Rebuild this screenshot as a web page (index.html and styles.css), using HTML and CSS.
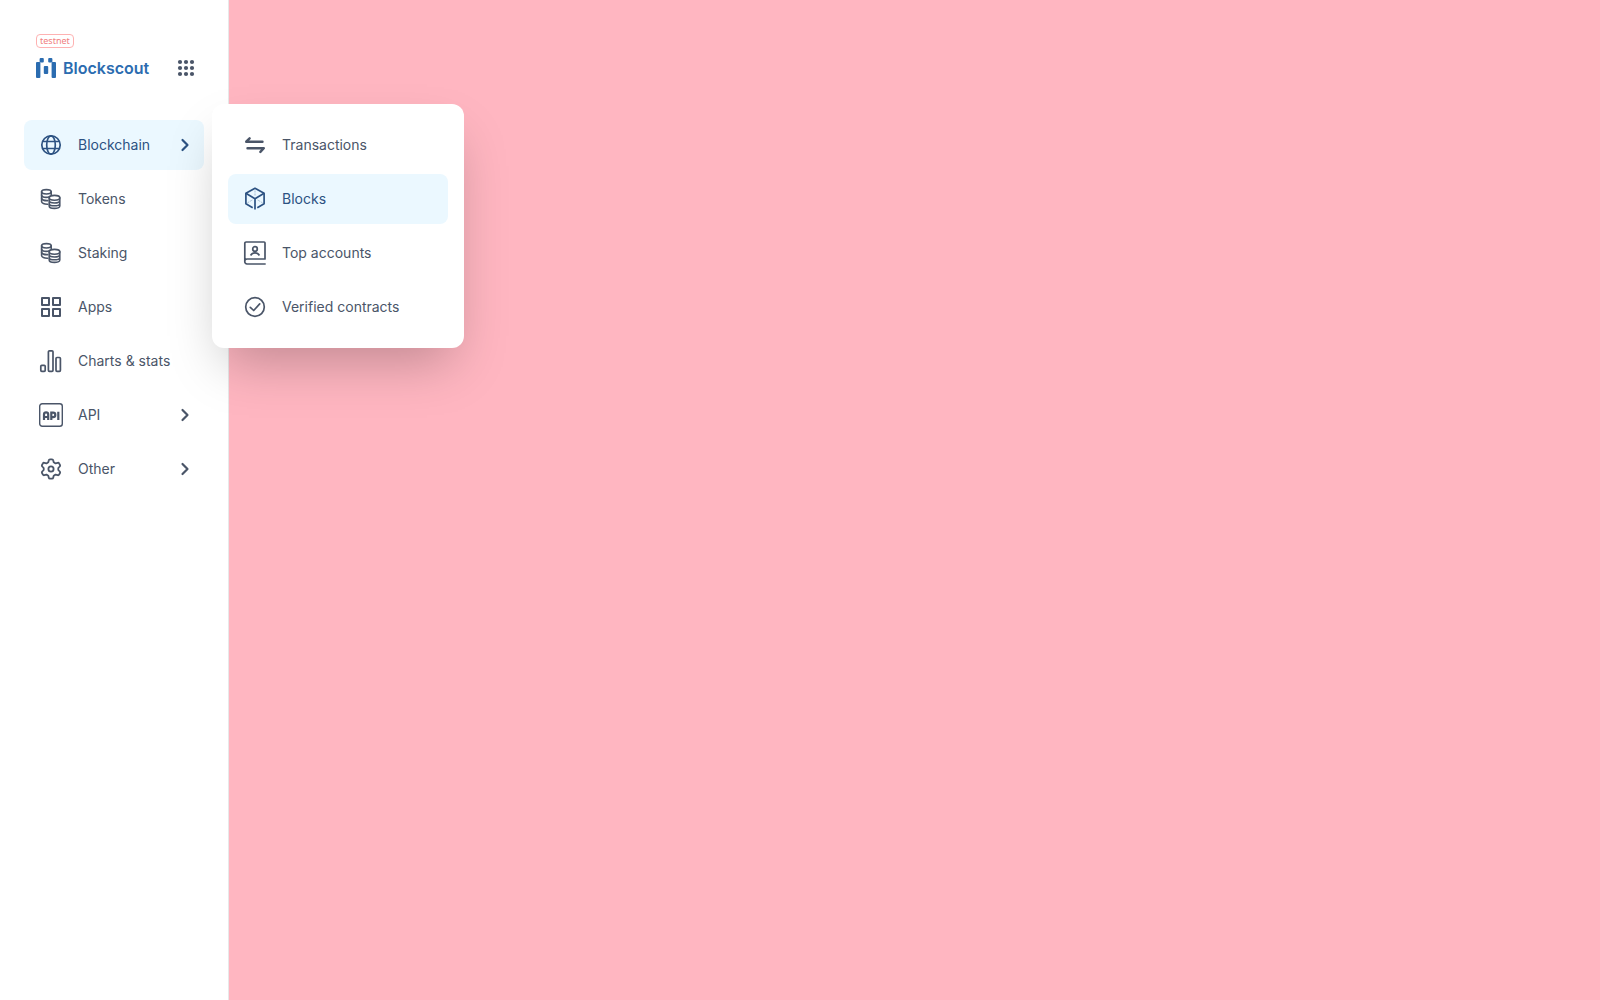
FILE: index.html
```html
<!DOCTYPE html>
<html lang="en">
<head>
<meta charset="utf-8">
<title>Blockscout</title>
<link rel="stylesheet" href="styles.css">
</head>
<body>
<svg class="sprite" aria-hidden="true">
  <symbol id="chevron" viewBox="0 0 20 20">
    <path d="M6.500 5l5 5-5 5" fill="none" stroke="currentColor" stroke-width="2.200" stroke-linecap="round" stroke-linejoin="round"/>
  </symbol>
  <symbol id="coins" viewBox="0 0 30 30">
    <g fill="none" stroke="currentColor" stroke-width="1.600" stroke-linecap="round">
      <ellipse cx="10.400" cy="7.800" rx="4.800" ry="2.200"/>
      <path d="M5.600 7.800v9.800c0 1.800 2.600 2.700 6.200 2.600M15.200 7.800v3"/>
      <path d="M5.600 11c0 2.500 5 3 8 1.600M5.600 14.300c0 1.600 2.600 2.500 6.200 2.300"/>
      <ellipse cx="18.500" cy="13.800" rx="5.300" ry="2.400"/>
      <path d="M13.200 13.800v8.200c0 3.200 10.600 3.200 10.600 0v-8.200M13.200 16.600c0 3.200 10.600 3.200 10.600 0M13.200 19.400c0 3.200 10.600 3.200 10.600 0"/>
    </g>
  </symbol>
</svg>
<div class="page">
  <aside class="sidebar">
    <header class="brand">
      <a class="logo" href="#">
        <span class="badge">testnet</span>
        <span class="logo-row">
          <svg class="logo-mark" viewBox="0 0 20 20" fill="currentColor" aria-hidden="true">
            <rect x="0" y="4" width="4.400" height="16" rx="1"/>
            <rect x="3.600" y="0" width="4.200" height="4.500" rx="1"/>
            <rect x="12.200" y="0" width="4.200" height="4.500" rx="1"/>
            <rect x="15.600" y="4" width="4.400" height="16" rx="1"/>
            <rect x="7.800" y="8" width="4.400" height="8" rx="1"/>
          </svg>
          <span class="logo-name">Blockscout</span>
        </span>
      </a>
      <button class="apps-button" type="button" aria-label="Networks">
        <svg class="icon-small" viewBox="0 0 20 20" fill="currentColor" aria-hidden="true">
          <circle cx="4" cy="4" r="2.100"/><circle cx="10" cy="4" r="2.100"/><circle cx="16" cy="4" r="2.100"/>
          <circle cx="4" cy="10" r="2.100"/><circle cx="10" cy="10" r="2.100"/><circle cx="16" cy="10" r="2.100"/>
          <circle cx="4" cy="16" r="2.100"/><circle cx="10" cy="16" r="2.100"/><circle cx="16" cy="16" r="2.100"/>
        </svg>
      </button>
    </header>
    <nav>
      <ul class="menu">
        <li class="menu-entry">
          <button class="item active" type="button" aria-expanded="true">
            <svg class="icon" viewBox="0 0 30 30" fill="none" stroke="currentColor" stroke-width="1.700" aria-hidden="true">
              <circle cx="15" cy="15" r="9.200"/>
              <ellipse cx="15" cy="15" rx="4.300" ry="9.200"/>
              <path d="M6.800 11.500h16.400M6.800 18.500h16.400"/>
            </svg>
            <span class="label">Blockchain</span>
            <svg class="icon-small" aria-hidden="true"><use href="#chevron"/></svg>
          </button>
          <ul class="menu submenu">
            <li><a class="item" href="#">
              <svg class="icon" viewBox="0 0 30 30" fill="none" stroke="currentColor" stroke-width="2.400" stroke-linecap="round" stroke-linejoin="round" aria-hidden="true">
                <path d="M22.500 11.700H6.200l3.400-3.400M7.500 18.300h16.300l-3.400 3.600"/>
              </svg>
              <span class="label">Transactions</span></a></li>
            <li><a class="item active" href="#">
              <svg class="icon" viewBox="0 0 30 30" fill="none" stroke="currentColor" stroke-width="1.700" stroke-linejoin="round" aria-hidden="true">
                <path d="M12.700 23.700L5.900 19.800V9.300L15 4.300l9.100 5v10.500l-6.800 3.900"/>
                <path d="M5.900 9.300l9.100 5.400 9.100-5.400M15 14.700v10.800"/>
                <path d="M15 6.500v6M7.500 18.800l5.500-3.200M22.500 18.800L17 15.600" stroke-width="1" stroke-dasharray="2 1" opacity=".35"/>
              </svg>
              <span class="label">Blocks</span></a></li>
            <li><a class="item" href="#">
              <svg class="icon" viewBox="0 0 30 30" fill="none" stroke="currentColor" stroke-width="1.700" stroke-linejoin="round" aria-hidden="true">
                <path d="M25.700 26H7a2.300 2.300 0 0 1-2.200-2.500V5.300A1.300 1.300 0 0 1 6.100 4h18a.9.900 0 0 1 .9.800v16.200H7a2.200 2.200 0 0 0-2.200 2.500"/>
                <circle cx="15" cy="11" r="2.300"/>
                <path d="M10.600 17.500c1-1.900 2.600-2.700 4.400-2.700s3.400.8 4.400 2.700"/>
              </svg>
              <span class="label">Top accounts</span></a></li>
            <li><a class="item" href="#">
              <svg class="icon" viewBox="0 0 30 30" fill="none" stroke="currentColor" stroke-width="1.700" stroke-linecap="round" stroke-linejoin="round" aria-hidden="true">
                <circle cx="15" cy="15" r="9.300"/>
                <path d="M10.300 15.300l3.400 3.200 6-6.600"/>
              </svg>
              <span class="label">Verified contracts</span></a></li>
          </ul>
        </li>
        <li><a class="item" href="#">
          <svg class="icon" aria-hidden="true"><use href="#coins"/></svg>
          <span class="label">Tokens</span></a></li>
        <li><a class="item" href="#">
          <svg class="icon" aria-hidden="true"><use href="#coins"/></svg>
          <span class="label">Staking</span></a></li>
        <li><a class="item" href="#">
          <svg class="icon" viewBox="0 0 30 30" fill="none" stroke="currentColor" stroke-width="2" stroke-linejoin="round" aria-hidden="true">
            <path d="M6 6h7v7H6zM17 6h7v7h-7zM6 17h7v7H6zM17 17h7v7h-7z"/>
          </svg>
          <span class="label">Apps</span></a></li>
        <li><a class="item" href="#">
          <svg class="icon" viewBox="0 0 30 30" fill="none" stroke="currentColor" stroke-width="1.700" aria-hidden="true">
            <rect x="4.800" y="19.300" width="4.400" height="6" rx="1"/>
            <rect x="12.400" y="4.800" width="4.600" height="20.500" rx="1"/>
            <rect x="20" y="11.500" width="4.400" height="13.800" rx="1"/>
          </svg>
          <span class="label">Charts &amp; stats</span></a></li>
        <li><button class="item" type="button" aria-expanded="false">
          <svg class="icon" viewBox="0 0 30 30" fill="none" stroke="currentColor" aria-hidden="true">
            <rect x="3.700" y="3.700" width="22.600" height="22.600" rx="2.500" stroke-width="1.400"/>
            <path d="M8 20v-5.500a2.100 2.100 0 0 1 4.200 0V20M8 17h4.200M15.300 20v-7.300h1.800a2.200 2.200 0 0 1 0 4.400h-1.800M22.300 11.800V20" stroke-width="2.200"/>
          </svg>
          <span class="label">API</span>
          <svg class="icon-small" aria-hidden="true"><use href="#chevron"/></svg></button></li>
        <li><button class="item" type="button" aria-expanded="false">
          <svg class="icon" viewBox="0 0 30 30" fill="none" stroke="currentColor" stroke-width="1.800" stroke-linejoin="round" aria-hidden="true">
            <path d="M14 5.300h2q1 0 1.200 1l.5 1.900 1.900 1.200 2.100-.6q1-.2 1.400.6l.9 1.600q.5.900-.3 1.500L22.300 14v2l1.400 1.500q.8.600.3 1.500l-.9 1.600q-.4.800-1.400.6l-2.100-.6-1.900 1.200-.5 1.900q-.2 1-1.200 1h-2q-1 0-1.200-1l-.5-1.900-1.900-1.200-2.100.6q-1 .2-1.400-.6L6 19q-.5-.9.300-1.500L7.700 16v-2l-1.400-1.500Q5.500 11.900 6 11l.9-1.600q.4-.8 1.400-.6l2.100.6 1.900-1.200.5-1.900q.2-1 1.200-1z"/>
            <circle cx="15" cy="15" r="2.600"/>
          </svg>
          <span class="label">Other</span>
          <svg class="icon-small" aria-hidden="true"><use href="#chevron"/></svg></button></li>
      </ul>
    </nav>
  </aside>
  <main class="content"></main>
</div>
</body>
</html>
```
FILE: styles.css
```css
*, *::before, *::after { box-sizing: border-box; }

body {
  margin: 0;
  font-family: Inter, "Liberation Sans", sans-serif;
  font-size: 14px;
  line-height: 20px;
  color: #4a5568;
  background: #fff;
}

.sprite { position: absolute; width: 0; height: 0; }

.page { display: flex; min-height: 100vh; }

.sidebar {
  flex: none;
  width: 229px;
  padding: 34px 24px 24px;
  border-right: 1px solid #e8e8e9;
}

.content { flex: 1; background: #ffb6c1; }

.brand {
  display: flex;
  align-items: flex-end;
  justify-content: space-between;
  padding: 0 8px 0 12px;
  margin-bottom: 42px;
}

.logo {
  display: flex;
  flex-direction: column;
  align-items: flex-start;
  gap: 10px;
  color: #2b6cb0;
  text-decoration: none;
}

.badge {
  padding: 0 3px;
  border: 1px solid #feb2b2;
  border-radius: 4px;
  font-size: 9px;
  font-family: "Noto Sans", Inter, sans-serif;
  line-height: 12px;
  color: #f08080;
}

.logo-row { display: flex; align-items: center; gap: 7px; }
.logo-mark { width: 20px; height: 20px; }
.logo-name { font-size: 16px; font-weight: 600; }

.apps-button {
  display: flex;
  padding: 0;
  border: 0;
  background: none;
  color: #4a5568;
}

.menu {
  display: flex;
  flex-direction: column;
  gap: 4px;
  margin: 0;
  padding: 0;
  list-style: none;
}

.menu-entry { position: relative; }

.item {
  display: flex;
  align-items: center;
  gap: 12px;
  width: 100%;
  padding: 10px 8px 10px 12px;
  border: 0;
  border-radius: 8px;
  background: none;
  font: inherit;
  color: #4a5568;
  text-align: left;
  text-decoration: none;
  cursor: pointer;
}

.item.active { background: #ebf8ff; color: #2c5282; }

.label { flex: 1; white-space: nowrap; }

.icon { flex: none; width: 30px; height: 30px; }
.icon-small { flex: none; width: 20px; height: 20px; }

.submenu {
  position: absolute;
  top: -16px;
  left: 188px;
  z-index: 1;
  width: 252px;
  padding: 16px;
  border-radius: 12px;
  background: #fff;
  box-shadow: 0 25px 50px -12px rgba(0, 0, 0, 0.25);
}
```
